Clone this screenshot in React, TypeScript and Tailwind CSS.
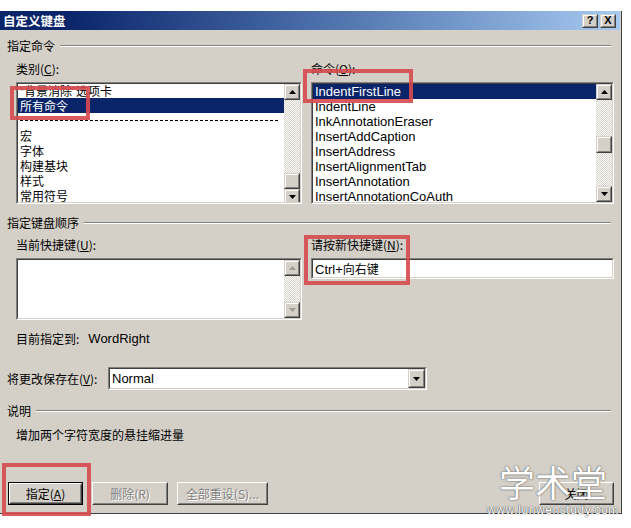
import React from "react";

const CJK = "font-['Noto_Sans_CJK_SC',sans-serif] text-[12px]";
const LAT = "font-['Liberation_Sans','Noto_Sans_CJK_SC',sans-serif] text-[13px]";

function Arrow({ dir, disabled }: { dir: "up" | "down"; disabled?: boolean }) {
  return (
    <svg width="7" height="4" viewBox="0 0 7 4">
      <polygon points={dir === "up" ? "3.5,0 7,4 0,4" : "0,0 7,0 3.5,4"} fill={disabled ? "#a09c96" : "#000"} />
    </svg>
  );
}

function Raised({ className = "", children }: { className?: string; children?: React.ReactNode }) {
  return (
    <div className={`bg-[#d4d0c8] border border-t-[#d4d0c8] border-l-[#d4d0c8] border-b-[#404040] border-r-[#404040] ${className}`}>
      <div className="w-full h-full border border-t-white border-l-white border-b-[#808080] border-r-[#808080] flex items-center justify-center">
        {children}
      </div>
    </div>
  );
}

function Sunken({ className = "", children }: { className?: string; children?: React.ReactNode }) {
  return (
    <div className={`border border-t-[#808080] border-l-[#808080] border-b-white border-r-white ${className}`}>
      <div className="w-full h-full border border-t-[#404040] border-l-[#404040] border-b-[#d4d0c8] border-r-[#d4d0c8] bg-white flex overflow-hidden">
        {children}
      </div>
    </div>
  );
}

const DITHER = "bg-[repeating-conic-gradient(#d4d0c8_0%_25%,#ffffff_0%_50%)] bg-[length:2px_2px]";

function ScrollBar({ thumbTop, thumbH, disabled }: { thumbTop?: number; thumbH?: number; disabled?: boolean }) {
  return (
    <div className="w-[16px] h-full flex flex-col shrink-0">
      <Raised className="w-[16px] h-[16px] shrink-0">
        <Arrow dir="up" disabled={disabled} />
      </Raised>
      {thumbTop !== undefined && thumbH !== undefined ? (
        <div className="flex-1 flex flex-col">
          <div className={`${DITHER}`} style={{ height: thumbTop }} />
          <Raised className="w-[16px] shrink-0">
            <div style={{ height: thumbH - 4 }} />
          </Raised>
          <div className={`flex-1 ${DITHER}`} />
        </div>
      ) : (
        <div className={`flex-1 ${DITHER}`} />
      )}
      <Raised className="w-[16px] h-[16px] shrink-0">
        <Arrow dir="down" disabled={disabled} />
      </Raised>
    </div>
  );
}

function SectionHeader({ label }: { label: string }) {
  return (
    <div className="h-[16px] flex items-center mr-[10px]">
      <span className={`${CJK} text-black leading-[16px]`}>{label}</span>
      <div className="flex-1 ml-[5px] border-t border-t-[#808080] border-b border-b-white" />
    </div>
  );
}

function Btn({ label, w, disabled, def }: { label: React.ReactNode; w: string; disabled?: boolean; def?: boolean }) {
  const inner = (
    <div className="w-full h-full bg-[#d4d0c8] border border-t-white border-l-white border-b-[#404040] border-r-[#404040]">
      <div className="w-full h-full border border-t-[#d4d0c8] border-l-[#d4d0c8] border-b-[#808080] border-r-[#808080] flex items-center justify-center">
        <span className={`${CJK} ${disabled ? "text-[#808080] [text-shadow:1px_1px_0_#fff]" : "text-black"}`}>{label}</span>
      </div>
    </div>
  );
  return def ? <div className={`${w} h-[23px] border border-black`}>{inner}</div> : <div className={`${w} h-[23px]`}>{inner}</div>;
}

const Q = ({ c }: { c: string }) => <span className="font-['Liberation_Sans',sans-serif]">{c}</span>;

export default function App() {
  const leftRows: React.ReactNode[] = [
    <>
      <Q c="“" />背景消除<Q c="”" />选项卡
    </>,
    "所有命令",
    "---",
    "宏",
    "字体",
    "构建基块",
    "样式",
    "常用符号",
  ];
  const rightRows = [
    "IndentFirstLine",
    "IndentLine",
    "InkAnnotationEraser",
    "InsertAddCaption",
    "InsertAddress",
    "InsertAlignmentTab",
    "InsertAnnotation",
    "InsertAnnotationCoAuth",
  ];
  return (
    <div className="relative w-[631px] h-[528px] bg-white overflow-hidden pt-[11px]">
      <div className="w-[622px] h-[503px] bg-[#d4d0c8] border-r border-b border-r-[#404040] border-b-[#404040] flex flex-col">
        {/* Title bar */}
        <div className="h-[19px] w-[620px] bg-linear-to-r from-[#0a246a] from-[10%] via-[#4a6ca8] to-[#a6caf0] flex items-center pl-[3px] pr-[4px]">
          <span className="font-['Noto_Sans_CJK_SC',sans-serif] text-[12.5px] font-bold text-white leading-[19px]">自定义键盘</span>
          <div className="flex-1" />
          <Raised className="w-[16px] h-[14px]">
            <span className="font-['Liberation_Sans',sans-serif] text-[11px] font-bold text-black leading-none">?</span>
          </Raised>
          <Raised className="w-[16px] h-[14px] ml-[2px]">
            <span className="font-['Liberation_Sans',sans-serif] text-[11px] font-bold text-black leading-none">X</span>
          </Raised>
        </div>

        {/* Body */}
        <div className="flex flex-col pl-[7px]">
          <div className="mt-[8px]">
            <SectionHeader label="指定命令" />
          </div>

          <div className="ml-[9px] mt-[8px] flex gap-[9px]">
            {/* Left column */}
            <div className="w-[286px] flex flex-col">
              <div className={`${CJK} h-[14px] leading-[14px] text-black`}>
                类别(<span className="underline">C</span>):
              </div>
              <Sunken className="mt-[6px] h-[122px] w-[286px]">
                <div className="flex-1 flex flex-col -mt-[1px]">
                  {leftRows.map((r, i) =>
                    r === "---" ? (
                      <div key={i} className="h-[15px] shrink-0 flex items-center pl-[2px] pr-[6px]">
                        <div className="w-full border-t border-dashed border-black" />
                      </div>
                    ) : (
                      <div
                        key={i}
                        className={`h-[15px] shrink-0 leading-[15px] pl-[2px] ${CJK} ${i === 1 ? "bg-[#0a246a] text-white" : "text-black"}`}
                      >
                        {r}
                      </div>
                    )
                  )}
                </div>
                <ScrollBar thumbTop={73} thumbH={16} />
              </Sunken>
            </div>

            {/* Right column */}
            <div className="w-[303px] flex flex-col">
              <div className={`${CJK} h-[14px] leading-[14px] text-black`}>
                命令(<span className="underline">O</span>):
              </div>
              <Sunken className="mt-[6px] h-[122px] w-[303px]">
                <div className="flex-1 flex flex-col">
                  {rightRows.map((r, i) => (
                    <div
                      key={i}
                      className={`h-[15px] shrink-0 leading-[15px] pl-[2px] ${LAT} ${i === 0 ? "bg-[#0a246a] text-white" : "text-black"}`}
                    >
                      {r}
                    </div>
                  ))}
                </div>
                <ScrollBar thumbTop={36} thumbH={17} />
              </Sunken>
            </div>
          </div>

          <div className="mt-[11px]">
            <SectionHeader label="指定键盘顺序" />
          </div>

          <div className="ml-[9px] mt-[7px] flex gap-[9px]">
            <div className="w-[286px] flex flex-col">
              <div className={`${CJK} h-[14px] leading-[14px] text-black`}>
                当前快捷键(<span className="underline">U</span>):
              </div>
              <Sunken className="mt-[6px] h-[62px] w-[286px]">
                <div className="flex-1" />
                <ScrollBar disabled />
              </Sunken>
            </div>
            <div className="w-[303px] flex flex-col">
              <div className={`${CJK} h-[14px] leading-[14px] text-black`}>
                请按新快捷键(<span className="underline">N</span>):
              </div>
              <Sunken className="mt-[6px] h-[21px] w-[303px]">
                <div className={`${LAT} leading-[17px] pl-[2px] text-black`}>
                  Ctrl+<span className="font-['Noto_Sans_CJK_SC',sans-serif] text-[12px]">向右键</span>
                </div>
              </Sunken>
            </div>
          </div>

          <div className="ml-[9px] mt-[12px] h-[14px] leading-[14px] text-black flex items-center">
            <span className={CJK}>目前指定到:</span>
            <span className={`${LAT} ml-[9px]`}>WordRight</span>
          </div>

          <div className="mt-[21px] h-[23px] flex items-center">
            <div className={`${CJK} w-[101px] text-black`}>
              将更改保存在(<span className="underline">V</span>):
            </div>
            <Sunken className="w-[319px] h-[23px]">
              <div className={`flex-1 ${LAT} leading-[19px] pl-[2px] text-black`}>Normal</div>
              <Raised className="w-[17px] h-[19px] shrink-0">
                <Arrow dir="down" />
              </Raised>
            </Sunken>
          </div>

          <div className="mt-[13px]">
            <SectionHeader label="说明" />
          </div>

          <div className={`${CJK} ml-[9px] mt-[9px] h-[14px] leading-[14px] text-black`}>增加两个字符宽度的悬挂缩进量</div>

          <div className="mt-[40px] ml-[1px] flex items-center">
            <Btn def w="w-[75px]" label={<>指定(<span className="underline">A</span>)</>} />
            <div className="ml-[9px]">
              <Btn disabled w="w-[76px]" label="删除(R)" />
            </div>
            <div className="ml-[9px]">
              <Btn disabled w="w-[91px]" label="全部重设(S)..." />
            </div>
            <div className="ml-auto mr-[7px]">
              <Btn w="w-[75px]" label="关闭" />
            </div>
          </div>
        </div>
      </div>

      {/* Red highlight rectangles */}
      <div className="absolute left-[10px] top-[86px] w-[80px] h-[34px] border-[4px] border-[#d6494c]/90" />
      <div className="absolute left-[303px] top-[69px] w-[110px] h-[34px] border-[4px] border-[#d6494c]/90" />
      <div className="absolute left-[304px] top-[235px] w-[106px] h-[50px] border-[4px] border-[#d6494c]/90" />
      <div className="absolute left-[2px] top-[463px] w-[89px] h-[53px] border-[4px] border-[#d6494c]/90" />

      {/* Watermark */}
      <div className="absolute left-[484px] top-[459px] w-[138px] flex flex-col items-center">
        <div className="font-['Noto_Sans_CJK_SC',sans-serif] text-[36px] leading-[44px] text-white [text-shadow:0_0_1px_#555,0_0_2px_#666]">
          学术堂
        </div>
        <div className="font-['Liberation_Sans',sans-serif] text-[12px] leading-[14px] text-white tracking-[0.6px] [text-shadow:0_0_1px_#444,0_0_1px_#444]">
          www.lunwenstudy.com
        </div>
      </div>
    </div>
  );
}
